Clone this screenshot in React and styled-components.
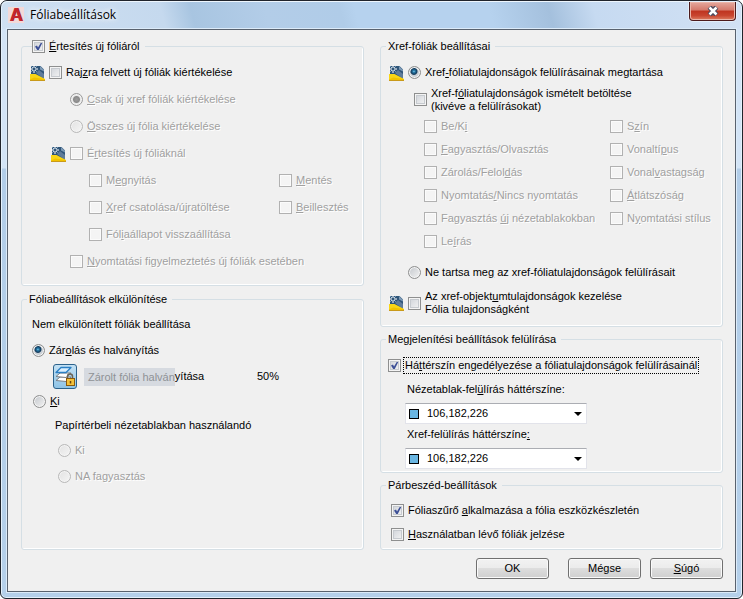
import React from 'react';
import styled, { createGlobalStyle, css } from 'styled-components';

// '&' marks the access key of a label
const Mnemonic = ({ text }) => {
  const at = text.indexOf('&');
  if (at < 0) return text;
  return (
    <>
      {text.slice(0, at)}
      <u>{text[at + 1]}</u>
      {text.slice(at + 2)}
    </>
  );
};

const Check = ({ label, focused, children, ...input }) => (
  <Option $disabled={input.disabled}>
    <Checkbox type="checkbox" {...input} />
    <OptionText $focused={focused}>{children || <Mnemonic text={label} />}</OptionText>
  </Option>
);

const Radio = ({ label, ...input }) => (
  <Option $disabled={input.disabled}>
    <RadioButton type="radio" {...input} />
    <OptionText>
      <Mnemonic text={label} />
    </OptionText>
  </Option>
);

const DrawingIcon = () => (
  <DrawingSvg viewBox="0 0 15 16" aria-hidden="true">
    <path d="M1 1h9.500L14 4.500V14H1z" fill="#2f5579" />
    <path d="M10 1l4 4v1.500l-4-2z" fill="#7d9ab6" />
    <path d="M6 8l3-3 5 4v5z" fill="#5f7c9b" />
    <path d="M0 9h5.500L15 14v2H0z" fill="#f9d616" />
    <path d="M0 14.500l4-2 11 1.500v1.500H0z" fill="#f2c200" />
    <path d="M0 15.500h15" stroke="#c99a1a" />
    <path d="M4 0v3M4 5v3M0 4h3M5 4h3" stroke="#fff" />
    <path d="M1.500 1.500l1.500 1.500M5 5l1.500 1.500M6.500 1.500L5 3M3 5L1.500 6.500" stroke="#b9d3e8" />
  </DrawingSvg>
);

const LockedLayerIcon = () => (
  <svg width="22" height="22" viewBox="0 0 22 22" aria-hidden="true">
    <g strokeLinejoin="round">
      <path d="M2 14.500l4-3.500h11l-5 4.500z" fill="#fff" stroke="#7b8085" />
      <path d="M2 10.500L6 7h11l-5 4.500z" fill="#fff" stroke="#7b8085" />
      <path d="M2 6.500L7 1.500h10l-5 5z" fill="#d9efff" stroke="#2b7fc4" strokeWidth="1.300" />
    </g>
    <path d="M13.500 13v-2.500a2.500 2.500 0 0 1 5 0V13" fill="none" stroke="#6b6456" strokeWidth="1.500" />
    <rect x="12.500" y="12.500" width="8" height="7" fill="#f3c13a" stroke="#8a5a0c" />
    <path d="M16.500 15v2.500" stroke="#6b430a" strokeWidth="1.500" />
  </svg>
);

const ColorSelect = ({ id, label, value }) => (
  <Field>
    <FieldLabel htmlFor={id}>
      <Mnemonic text={label} />
    </FieldLabel>
    <SelectBox>
      <Swatch $color={value} />
      <Select id={id} defaultValue={value}>
        <option value={value}>{value}</option>
      </Select>
      <svg width="8" height="4" viewBox="0 0 8 4" aria-hidden="true">
        <path d="M0 0h8L4 4z" fill="#000" />
      </svg>
    </SelectBox>
  </Field>
);

const reloadOptions = [
  ['Be/K&i', 'S&zín'],
  ['&Fagyasztás/Olvasztás', 'Vonaltí&pus'],
  ['Zárolás/Felol&dás', 'Vonal&vastagság'],
  ['Nyomtatás&/Nincs nyomtatás', '&Átlátszóság'],
  ['Fagyasztás &új nézetablakokban', 'N&yomtatási stílus'],
  ['Le&írás'],
];

const App = () => (
  <>
    <GlobalStyle />
    <Window>
      <TitleBar>
        <Logo aria-hidden="true">A</Logo>
        <Title>Fóliabeállítások</Title>
        <CloseButton type="button" aria-label="Bezárás">
          <svg width="12" height="10" viewBox="0 0 12 10" aria-hidden="true">
            <path d="M2.500 1l7 8M9.500 1l-7 8" stroke="#4d4a5c" strokeWidth="5" />
            <path d="M2.500 1.500l7 7M9.500 1.500l-7 7" stroke="#fff" strokeWidth="2.500" />
          </svg>
        </CloseButton>
      </TitleBar>
      <Body>
        <Columns>
          <Column>
            <Group $bottom={10}>
              <Legend $indent={10}>
                <Check label="&Értesítés új fóliáról" defaultChecked />
              </Legend>
              <Row $indent={8}>
                <DrawingIcon />
                <Check label="Raj&zra felvett új fóliák kiértékelése" />
              </Row>
              <Row $indent={48}>
                <Radio name="evaluate" label="&Csak új xref fóliák kiértékelése" defaultChecked disabled />
              </Row>
              <Row $indent={48}>
                <Radio name="evaluate" label="&Összes új fólia kiértékelése" disabled />
              </Row>
              <Row $indent={29}>
                <DrawingIcon />
                <Check label="É&rtesítés új fóliáknál" disabled />
              </Row>
              <EventGrid>
                <Check label="M&egnyitás" disabled />
                <Check label="&Mentés" disabled />
                <Check label="&Xref csatolása/újratöltése" disabled />
                <Check label="&Beillesztés" disabled />
                <Check label="Fól&iaállapot visszaállítása" disabled />
              </EventGrid>
              <Row $indent={48}>
                <Check label="&Nyomtatási figyelmeztetés új fóliák esetében" disabled />
              </Row>
            </Group>

            <Group $grow>
              <Legend>Fóliabeállítások elkülönítése</Legend>
              <Row $indent={10} $height={25}>
                Nem elkülönített fóliák beállítása
              </Row>
              <Row $indent={10}>
                <Radio name="isolate" label="Zár&olás és halványítás" defaultChecked />
              </Row>
              <Row $indent={31} $height={25}>
                <LockButton type="button" aria-label="Zárolt fólia halványítása">
                  <LockedLayerIcon />
                </LockButton>
                <Fader>
                  <FaderFill>Zárolt fólia halván</FaderFill>
                  <span>yítása</span>
                </Fader>
                <Percent>50%</Percent>
              </Row>
              <Row $indent={11} $height={25}>
                <Radio name="isolate" label="&Ki" />
              </Row>
              <Row $indent={33} $height={23}>
                Papírtérbeli nézetablakban használandó
              </Row>
              <Row $indent={36}>
                <Radio name="paper" label="Ki" disabled />
              </Row>
              <Row $indent={36} $height={25}>
                <Radio name="paper" label="NA fagyasztás" disabled />
              </Row>
            </Group>
          </Column>

          <Column>
            <Group $bottom={6}>
              <Legend>Xref-fóliák beállításai</Legend>
              <Row $indent={8}>
                <DrawingIcon />
                <Radio name="xref" label="Xref&-fóliatulajdonságok felülírásainak megtartása" defaultChecked />
              </Row>
              <Row $indent={33}>
                <Check>
                  Xref-f<u>ó</u>liatulajdonságok ismételt betöltése
                  <br />
                  (kivéve a felülírásokat)
                </Check>
              </Row>
              <ReloadGrid>
                {reloadOptions.flat().map((label) => (
                  <Check key={label} label={label} disabled />
                ))}
              </ReloadGrid>
              <Row $indent={27}>
                <Radio name="xref" label="Ne tartsa me&g az xref-fóliatulajdonságok felülírásait" />
              </Row>
              <Row $indent={8} $height={34}>
                <DrawingIcon />
                <Check>
                  Az xref-objekt<u>u</u>mtulajdonságok kezelése
                  <br />
                  Fólia tulajdonságként
                </Check>
              </Row>
            </Group>

            <Group $bottom={3}>
              <Legend>Megjelenítési beállítások felülírása</Legend>
              <Row $indent={7}>
                <Check
                  label="Há&ttérszín engedélyezése a fóliatulajdonságok felülírásainál"
                  defaultChecked
                  focused
                />
              </Row>
              <ColorSelect id="viewport-color" label="Nézetablak-fel&ülírás háttérszíne:" value="106,182,226" />
              <ColorSelect id="xref-color" label="Xref-felülírás háttérszíne&:" value="106,182,226" />
            </Group>

            <Group $bottom={3} $grow>
              <Legend>Párbeszéd-beállítások</Legend>
              <Row $indent={10} $height={24}>
                <Check label="Fóliaszűrő &alkalmazása a fólia eszközkészletén" defaultChecked />
              </Row>
              <Row $indent={10} $height={24}>
                <Check label="&Használatban lévő fóliák jelzése" />
              </Row>
            </Group>
          </Column>
        </Columns>
        <Footer>
          <Button type="button" $spaced>
            OK
          </Button>
          <Button type="button">Mégse</Button>
          <Button type="button">
            <Mnemonic text="&Súgó" />
          </Button>
        </Footer>
      </Body>
    </Window>
  </>
);

export default App;

const GlobalStyle = createGlobalStyle`
  *, *::before, *::after {
    box-sizing: border-box;
  }
  body {
    margin: 0;
    background: #fff;
    color: #000;
    font: 11px/13px "Liberation Sans", Arial, sans-serif;
  }
  button, select, input {
    font: inherit;
    color: inherit;
    margin: 0;
  }
`;

const Window = styled.main`
  display: flex;
  flex-direction: column;
  min-height: 100vh;
  padding: 0 6px 6px;
  border: 1px solid #20242c;
  border-radius: 7px 7px 6px 6px;
  box-shadow: inset 0 0 0 1px #e4f1fc;
  background: linear-gradient(180deg, #d3e4f6 0, #d3e4f6 167px, #b2cde8 168px, #b5d0ea 100%);
`;

const TitleBar = styled.header`
  display: flex;
  align-items: center;
  height: 28px;
  margin: 0 -5px;
  padding: 0 5px 1px 6px;
  border-radius: 6px 6px 0 0;
  border-top: 1px solid #eef6fd;
  background: linear-gradient(
    75deg,
    #cfe0f2 0,
    #c5d9ee 22%,
    #a8c5e1 26%,
    #b3cde8 36%,
    #b0cce8 46%,
    #b6d2ee 48%,
    #b6d2ee 66%,
    #a4c0dd 74%,
    #c6daf1 80%,
    #d2e1f4 100%
  );
`;

const Logo = styled.span`
  width: 16px;
  height: 16px;
  margin-right: 6px;
  background: #f3d9d8;
  color: #c4262c;
  font: bold 18px/17px "Liberation Sans", Arial, sans-serif;
  text-align: center;
  text-shadow: 1px 0 #a51e25;
`;

const Title = styled.h1`
  flex: 1;
  margin: 0;
  font: 12px/16px "Open Sans", "Noto Sans", sans-serif;
  text-shadow: 0 0 6px #fff, 0 0 6px #fff;
`;

const CloseButton = styled.button`
  display: flex;
  align-items: center;
  justify-content: center;
  align-self: flex-start;
  width: 47px;
  height: 19px;
  padding: 0;
  border: 1px solid #4c1a1c;
  border-top: 0;
  border-radius: 0 0 4px 4px;
  box-shadow: inset 0 0 0 1px #eab5a9, 0 0 0 1px #e3eefa;
  background: linear-gradient(180deg, #e5a99e 0, #d5796b 45%, #bf3420 50%, #c8452f 75%, #dd7e62 100%);
`;

const Body = styled.div`
  flex: 1;
  display: flex;
  flex-direction: column;
  padding: 9px 12px 10px 13px;
  border: 1px solid #59626e;
  box-shadow: 0 0 0 1px #dcebf9;
  background: #f0f0f0;
`;

const Columns = styled.div`
  display: grid;
  grid-template-columns: minmax(0, 1fr) minmax(0, 1fr);
  gap: 16px;
`;

const Column = styled.div`
  display: flex;
  flex-direction: column;
  gap: 6px;

  & + & {
    gap: 5px;
  }
`;

const Group = styled.fieldset`
  flex: ${(props) => (props.$grow ? 1 : 'none')};
  min-width: 0;
  margin: 0;
  padding: 6px 0 ${(props) => props.$bottom || 0}px;
  border: 1px solid #d5dfe5;
  border-radius: 3px;
  box-shadow: inset -1px -1px #fff;
`;

const Legend = styled.legend`
  display: flex;
  align-items: center;
  height: 14px;
  margin-left: ${(props) => props.$indent || 5}px;
  padding: 0 5px 0 ${(props) => (props.$indent ? 0 : 2)}px;
`;

const Row = styled.div`
  display: flex;
  align-items: center;
  min-height: ${(props) => props.$height || 27}px;
  padding-left: ${(props) => props.$indent}px;
  white-space: nowrap;
`;

const Option = styled.label`
  display: flex;
  align-items: center;
  gap: 4px;
  white-space: nowrap;
  ${(props) =>
    props.$disabled &&
    css`
      color: #a0a0a0;
      text-shadow: 1px 1px #fff;
    `}
`;

const OptionText = styled.span`
  ${(props) =>
    props.$focused &&
    css`
      margin-left: -2px;
      padding: 1px;
      border: 1px dotted #000;
    `}
`;

const Checkbox = styled.input`
  appearance: none;
  flex: none;
  width: 13px;
  height: 13px;
  border: 1px solid #8e8f8f;
  box-shadow: inset 0 0 0 1px #f4f4f4, inset 0 0 0 2px #c6cacf;
  background: linear-gradient(135deg, #cdd1d7, #f6f6f6);
  &:checked {
    background: url("data:image/svg+xml,%3Csvg xmlns='http://www.w3.org/2000/svg' viewBox='0 0 11 11'%3E%3Cpath d='M2 5.500L4 4.500 5 6.500 8 1.500H9.500L5.500 9.500H4.500Z' fill='%233c4f96'/%3E%3C/svg%3E"),
      linear-gradient(135deg, #cdd1d7, #f6f6f6);
  }
  &:disabled {
    border-color: #b1b1b1;
    box-shadow: inset 0 0 0 1px #fbfbfb;
    background: #f4f4f4;
  }
`;

const RadioButton = styled.input`
  appearance: none;
  flex: none;
  width: 13px;
  height: 13px;
  border: 1px solid #8e8f8f;
  border-radius: 50%;
  box-shadow: inset 0 0 0 1px #f4f4f4;
  background: linear-gradient(135deg, #c3c7cc, #f3f3f3);
  &:checked {
    background: radial-gradient(circle at 45% 40%, #8fd4f2 0, #2a7fae 1px, #12395a 3px, #12395a 3px, #c8ced4 4px);
  }
  &:disabled {
    border-color: #b8b8b8;
    background: linear-gradient(135deg, #e2e2e2, #f4f4f4);
  }
  &:checked:disabled {
    border-color: #9a9a9a;
    background: radial-gradient(circle, #9c9c9c 0, #8a8a8a 3px, #e6e6e6 4px);
  }
`;

const DrawingSvg = styled.svg`
  flex: none;
  width: 15px;
  height: 16px;
  margin-right: 4px;
`;

const EventGrid = styled.div`
  display: grid;
  grid-template-columns: 190px 1fr;
  grid-auto-rows: 27px;
  padding-left: 67px;
`;

const ReloadGrid = styled.div`
  display: grid;
  grid-template-columns: 186px 1fr;
  grid-auto-rows: 23px;
  padding-left: 43px;
  margin: 2px 0 6px;
`;

const LockButton = styled.button`
  display: flex;
  flex: none;
  align-items: center;
  justify-content: center;
  width: 24px;
  height: 25px;
  margin-right: 7px;
  padding: 0;
  border: 1px solid #2c628b;
  border-radius: 3px;
  background: linear-gradient(180deg, #c3e1f4, #8fc4e6);
`;

const Fader = styled.div`
  display: flex;
  align-items: center;
  width: 173px;
`;

const FaderFill = styled.span`
  padding: 3px 0 2px 4px;
  background: #d6dae0;
  color: #8f9296;
`;

const Percent = styled.output`
  display: block;
`;

const Field = styled.div`
  padding: 0 24px;
`;

const FieldLabel = styled.label`
  display: flex;
  align-items: center;
  height: 20px;
  padding-left: 2px;
  white-space: pre;
`;

const SelectBox = styled.div`
  display: flex;
  align-items: center;
  width: 182px;
  height: 21px;
  margin-top: 4px;
  padding: 0 4px 0 3px;
  border: 1px solid #e2e3ea;
  border-top-color: #abadb3;
  background: #fff;
`;

const Swatch = styled.span`
  width: 10px;
  height: 10px;
  border: 1px solid #000;
  background: rgb(${(props) => props.$color});
`;

const Select = styled.select`
  appearance: none;
  flex: 1;
  padding: 0 0 0 8px;
  border: 0;
  outline: 0;
  background: transparent;
`;

const Footer = styled.footer`
  display: flex;
  justify-content: flex-end;
  gap: 9px;
  padding-top: 8px;
`;

const Button = styled.button`
  width: 73px;
  height: 21px;
  margin-right: ${(props) => (props.$spaced ? 10 : 0)}px;
  padding: 0;
  border: 1px solid #707070;
  border-radius: 3px;
  box-shadow: inset 0 0 0 1px #fafafa;
  background: linear-gradient(180deg, #f2f2f2 0, #ebebeb 50%, #dddddd 50%, #cfcfcf 100%);
`;
